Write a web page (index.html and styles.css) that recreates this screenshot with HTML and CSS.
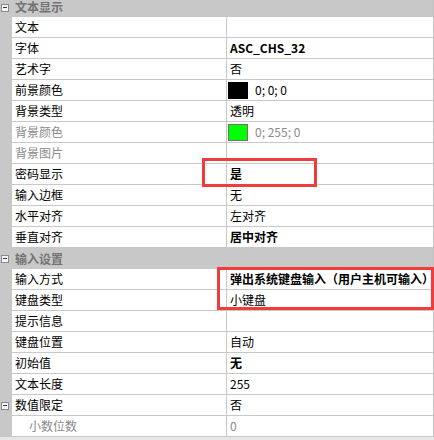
FILE: index.html
```html
<!DOCTYPE html>
<html lang="zh-CN">
<head>
<meta charset="utf-8">
<title>属性</title>
<link rel="stylesheet" href="styles.css">
</head>
<body>
<div class="panel">
  <div class="group group-top"><span class="toggle"></span><span class="group-title">文本显示</span></div>
  <div class="row"><span class="gutter"></span><span class="name">文本</span><span class="val"></span></div>
  <div class="row"><span class="gutter"></span><span class="name">字体</span><span class="val bold">ASC_CHS_32</span></div>
  <div class="row"><span class="gutter"></span><span class="name">艺术字</span><span class="val">否</span></div>
  <div class="row"><span class="gutter"></span><span class="name">前景颜色</span><span class="val"><span class="swatch black"></span>0; 0; 0</span></div>
  <div class="row"><span class="gutter"></span><span class="name">背景类型</span><span class="val">透明</span></div>
  <div class="row"><span class="gutter"></span><span class="name dim">背景颜色</span><span class="val dim"><span class="swatch green"></span>0; 255; 0</span></div>
  <div class="row"><span class="gutter"></span><span class="name dim">背景图片</span><span class="val"></span></div>
  <div class="row"><span class="gutter"></span><span class="name">密码显示</span><span class="val bold">是</span></div>
  <div class="row"><span class="gutter"></span><span class="name">输入边框</span><span class="val">无</span></div>
  <div class="row"><span class="gutter"></span><span class="name">水平对齐</span><span class="val">左对齐</span></div>
  <div class="row"><span class="gutter"></span><span class="name">垂直对齐</span><span class="val bold">居中对齐</span></div>
  <div class="group"><span class="toggle"></span><span class="group-title">输入设置</span></div>
  <div class="row"><span class="gutter"></span><span class="name">输入方式</span><span class="val bold">弹出系统键盘输入（用户主机可输入）</span></div>
  <div class="row"><span class="gutter"></span><span class="name">键盘类型</span><span class="val">小键盘</span></div>
  <div class="row"><span class="gutter"></span><span class="name">提示信息</span><span class="val"></span></div>
  <div class="row"><span class="gutter"></span><span class="name">键盘位置</span><span class="val">自动</span></div>
  <div class="row"><span class="gutter"></span><span class="name">初始值</span><span class="val bold">无</span></div>
  <div class="row"><span class="gutter"></span><span class="name">文本长度</span><span class="val">255</span></div>
  <div class="row"><span class="gutter"><span class="toggle"></span></span><span class="name">数值限定</span><span class="val">否</span></div>
  <div class="row"><span class="gutter"></span><span class="name dim sub">小数位数</span><span class="val dim">0</span></div>
  <div class="mark mark-password"></div>
  <div class="mark mark-input"></div>
</div>
</body>
</html>
```

FILE: styles.css
```css
html, body {
  margin: 0;
  padding: 0;
}
body {
  background: #e6e6e6;
  font-family: "Noto Sans CJK SC", "Noto Sans", sans-serif;
  font-size: 12px;
  color: #000;
  overflow: hidden;
}
.panel {
  position: relative;
  width: 434px;
  box-sizing: border-box;
  border-right: 1px solid #c4c4c4;
  background: #fff;
}
.group {
  display: flex;
  align-items: center;
  height: 21px;
  background: #c8c8c8;
  position: relative;
}
.group-top {
  height: 17px;
  align-items: flex-start;
}
.group-title {
  margin-left: 15px;
  font-weight: bold;
  color: #737373;
  line-height: 21px;
}
.group-top .group-title {
  line-height: 14px;
}
.group .toggle {
  position: absolute;
  left: 1px;
  top: 7px;
}
.group-top .toggle {
  top: 4px;
}
.toggle {
  display: block;
  width: 8px;
  height: 8px;
  box-sizing: border-box;
  border: 1px solid #8a8a8a;
  background: #f4f4f4;
  position: relative;
}
.toggle::after {
  content: "";
  position: absolute;
  left: 1px;
  right: 1px;
  top: 2px;
  height: 1px;
  background: #2a3a6a;
}
.row {
  display: flex;
  height: 21px;
}
.gutter {
  width: 12px;
  flex: none;
  background: #c8c8c8;
  position: relative;
}
.gutter .toggle {
  position: absolute;
  left: 1px;
  top: 7px;
}
.name {
  width: 215px;
  flex: none;
  box-sizing: border-box;
  padding-left: 3px;
  line-height: 20px;
  border-right: 1px solid #c8c8c8;
  border-bottom: 1px solid #c8c8c8;
  white-space: nowrap;
}
.val {
  flex: 1;
  display: flex;
  align-items: center;
  padding-left: 3px;
  line-height: 20px;
  border-bottom: 1px solid #c8c8c8;
  white-space: nowrap;
  overflow: hidden;
}
.bold {
  font-weight: bold;
}
.dim {
  color: #8a8a8a;
}
.sub {
  padding-left: 17px;
}
.swatch {
  display: inline-block;
  width: 20px;
  height: 17px;
  box-sizing: border-box;
  margin-left: -2px;
  margin-right: 7px;
}
.swatch.black {
  background: #000;
}
.swatch.green {
  background: #00ff00;
  border: 1px solid #707070;
}
.mark {
  position: absolute;
  box-sizing: border-box;
  border: 3px solid #f23b3b;
}
.mark-password {
  left: 202px;
  top: 158px;
  width: 115px;
  height: 29px;
}
.mark-input {
  left: 217px;
  top: 267px;
  width: 217px;
  height: 43px;
}
```
